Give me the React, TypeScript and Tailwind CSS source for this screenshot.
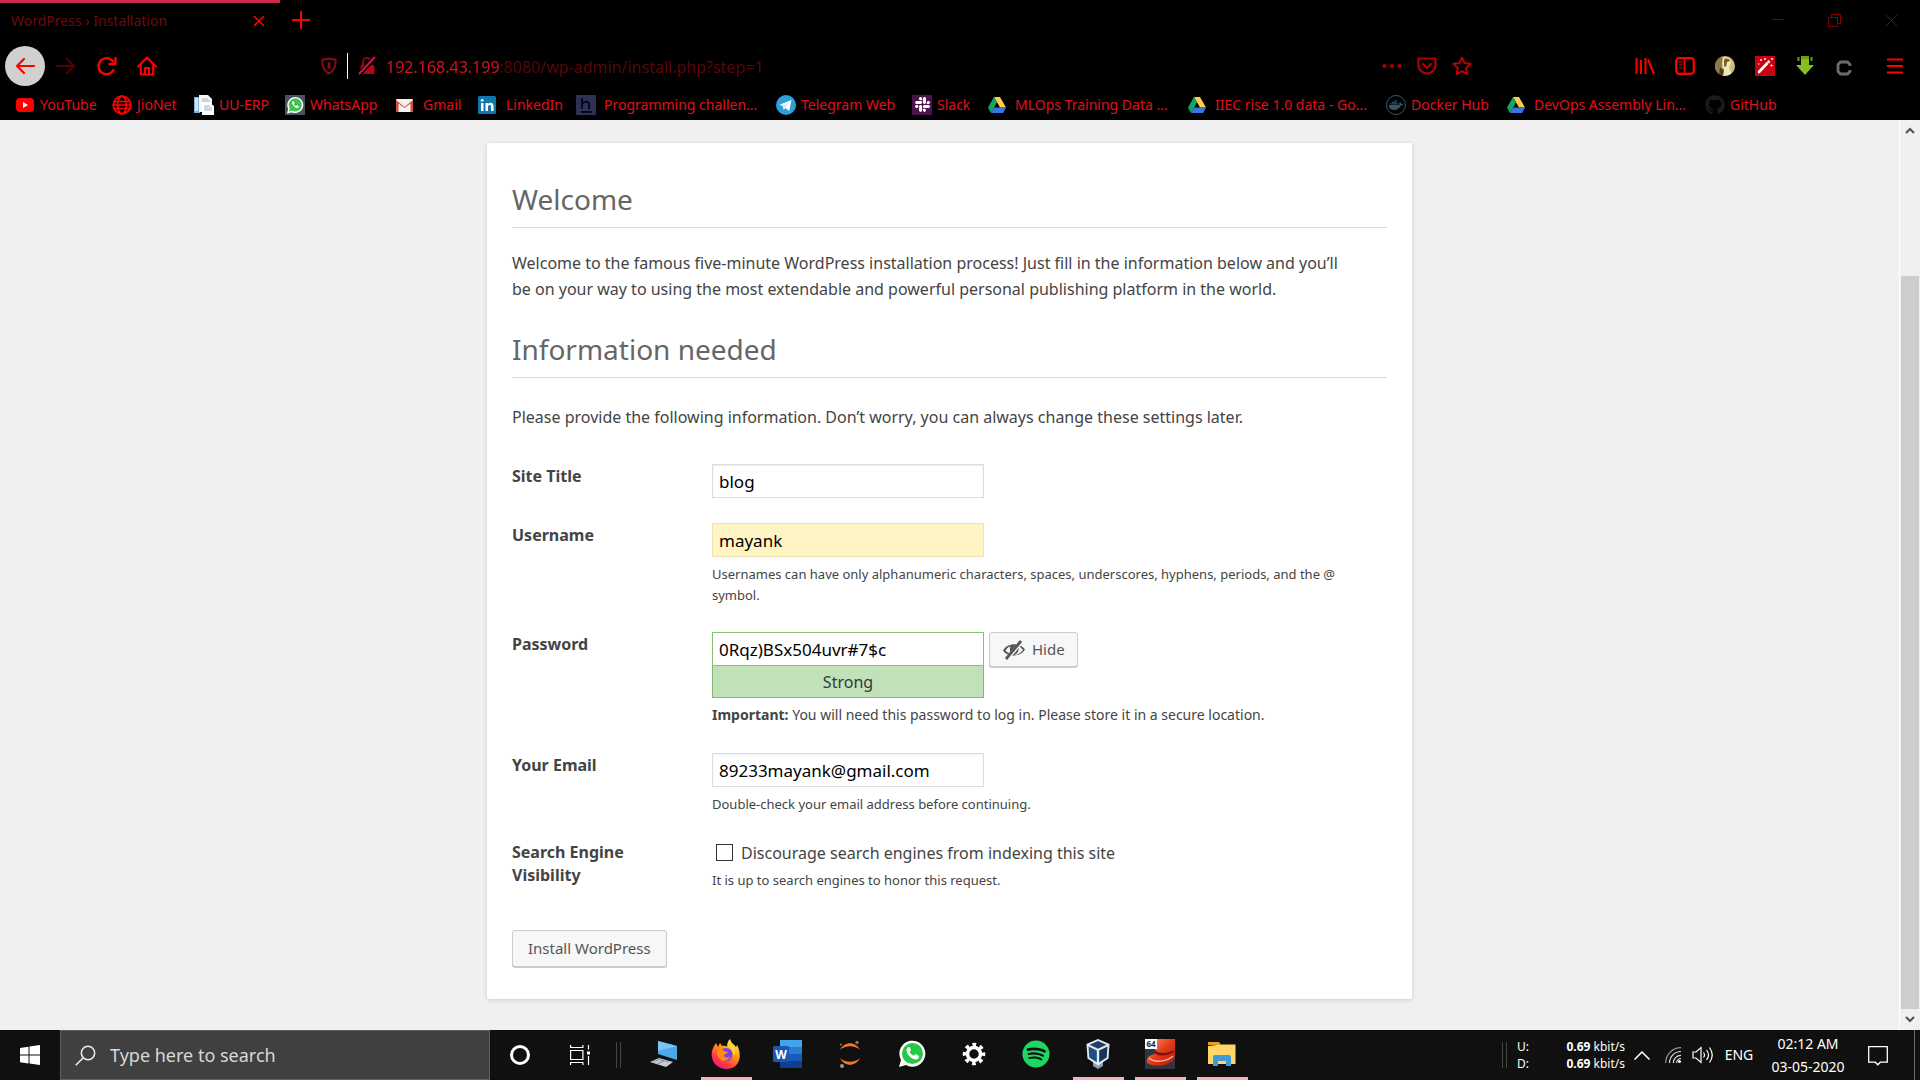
import type { ReactNode } from "react";
import { FaDocker, FaGithub, FaSlack, FaSpotify } from "react-icons/fa6";

const RED = "#ff0000";

function Drive() {
  return (
    <svg viewBox="0 0 20 20" className="h-5 w-5">
      <path d="M7 2h6l6 10.5h-6z" fill="#ffcf48" />
      <path d="M7 2 1 12.5 4 18l6-10.7z" fill="#11a861" />
      <path d="M7 12.5h12L16 18H4z" fill="#3777e3" />
    </svg>
  );
}

type Bookmark = { name: string; width: string; wide?: boolean; icon: ReactNode };

const bookmarks: Bookmark[] = [
  {
    name: "YouTube",
    width: "w-[97px]",
    icon: (
      <svg viewBox="0 0 20 20" className="h-5 w-5">
        <rect x="1" y="3" width="18" height="14" rx="4" fill={RED} />
        <path d="M8 7v6l5-3z" fill="#fff" />
      </svg>
    ),
  },
  {
    name: "JioNet",
    width: "w-[82px]",
    icon: (
      <svg viewBox="0 0 20 20" className="h-5 w-5" fill="none" stroke={RED} strokeWidth="1.8">
        <circle cx="10" cy="10" r="8.8" />
        <ellipse cx="10" cy="10" rx="4.4" ry="8.8" />
        <path d="M2 6.5h16M2 13.5h16M1 10h18" strokeWidth="1.4" />
      </svg>
    ),
  },
  {
    name: "UU-ERP",
    width: "w-[91px]",
    icon: (
      <svg viewBox="0 0 20 20" className="h-5 w-5">
        <path d="M0 2h6v16H0z" fill="#7fb0d8" />
        <path d="M1 3h3v13H1z" fill="#cfe5f5" />
        <path d="M5 0h9l4 4v13H5z" fill="#f4f7fa" />
        <path d="M8 8h8l4 3v9H8z" fill="#fff" />
        <path d="M8 4h6M8 6h8M10 11h6M10 13h8M10 15h8" stroke="#9fb4c6" strokeWidth="1" />
      </svg>
    ),
  },
  {
    name: "WhatsApp",
    width: "w-[110px]",
    icon: (
      <span className="flex h-5 w-5 items-center justify-center bg-[#47535e]">
        <svg viewBox="0 0 20 20" className="h-5 w-5">
          <path d="M3 17.5 4 13.700A7.300 7.300 0 1 1 7 16.500z" fill="#3fc351" stroke="#fff" strokeWidth="1.400" />
          <path d="M7.500 6.500c-2 2 3.500 8 6 6l.3-1.300-1.800-1-1 .9c-1-.4-1.800-1.200-2.200-2.100l.8-.8-.7-1.700z" fill="#fff" />
        </svg>
      </span>
    ),
  },
  {
    name: "Gmail",
    width: "w-[83px]",
    wide: true,
    icon: (
      <svg viewBox="0 0 20 20" className="h-5 w-5">
        <rect x="1" y="4" width="17" height="13" rx="1" fill="#f2f2f2" />
        <path d="M1 17V5l8.500 7L18 5v12h-2.500V8.500L9.500 13 3.500 8.500V17z" fill="#d54b3d" />
      </svg>
    ),
  },
  {
    name: "LinkedIn",
    width: "w-[98px]",
    wide: true,
    icon: (
      <svg viewBox="0 0 20 20" className="h-5 w-5">
        <rect x="0" y="1" width="18" height="18" rx="1.500" fill="#0f76b0" />
        <path d="M3 8h2.500v8H3zM7.500 8H10v1c1.500-2 5.500-1.700 5.500 2v5H13v-4.300c0-2.300-3-2-3 0V16H7.500z" fill="#fff" />
        <circle cx="4.200" cy="5.300" r="1.400" fill="#fff" />
      </svg>
    ),
  },
  {
    name: "Programming challen...",
    width: "w-[200px]",
    wide: true,
    icon: (
      <svg viewBox="0 0 20 20" className="h-5 w-5">
        <rect width="20" height="20" rx="1" fill="#2d3155" />
        <path d="M6 3v11M6 9c1.500-3 7-3 7 .5V14M5 17h11" stroke="#060818" strokeWidth="2" fill="none" />
      </svg>
    ),
  },
  {
    name: "Telegram Web",
    width: "w-[136px]",
    icon: (
      <svg viewBox="0 0 20 20" className="h-5 w-5">
        <circle cx="10" cy="10" r="10" fill="#2f9fd9" />
        <path d="m3.500 9.700 12-4.700-2.300 11-4-3-1.700 2-.5-3.800z" fill="#fff" />
        <path d="m7 11.200 6-4-4.500 5z" fill="#b9dcf0" />
      </svg>
    ),
  },
  {
    name: "Slack",
    width: "w-[75px]",
    icon: (
      <span className="flex h-5 w-5 items-center justify-center bg-[#4a154b]">
        <FaSlack color="#fff" size={17} />
      </span>
    ),
  },
  { name: "MLOps Training Data ...", width: "w-[200px]", wide: true, icon: <Drive /> },
  { name: "IIEC rise 1.0 data - Go...", width: "w-[199px]", wide: true, icon: <Drive /> },
  {
    name: "Docker Hub",
    width: "w-[120px]",
    icon: (
      <span className="flex h-5 w-5 items-center justify-center rounded-full border border-[#35566c]">
        <FaDocker color="#35566c" size={14} />
      </span>
    ),
  },
  { name: "DevOps Assembly Lin...", width: "w-[199px]", wide: true, icon: <Drive /> },
  { name: "GitHub", width: "w-[80px]", icon: <FaGithub color="#191b1e" size={20} /> },
];

function IconButton({ label, className = "w-10", children }: { label: string; className?: string; children: ReactNode }) {
  return (
    <button type="button" aria-label={label} className={`flex h-10 shrink-0 items-center justify-center ${className}`}>
      {children}
    </button>
  );
}

function BrowserChrome() {
  return (
    <header className="bg-black text-[#e0101a]">
      <div className="flex h-11 items-start justify-between">
        <div className="flex items-start">
          <div className="flex h-11 w-[280px] items-start justify-between border-t-3 border-[#cc2a4c] pr-[9px] pl-[11px]">
            <span className="pt-2 text-sm leading-5 text-[#6e0a0e]">WordPress › Installation</span>
            <button type="button" aria-label="Close tab" className="flex h-9 w-6 items-center justify-center">
              <svg viewBox="0 0 12 12" className="h-3 w-3" stroke={RED} strokeWidth="1.6">
                <path d="m1 1 10 10M11 1 1 11" />
              </svg>
            </button>
          </div>
          <IconButton label="New tab" className="w-[42px]">
            <svg viewBox="0 0 18 18" className="h-[18px] w-[18px]" stroke={RED} strokeWidth="2">
              <path d="M9 0v18M0 9h18" />
            </svg>
          </IconButton>
        </div>
        <div className="flex">
          <IconButton label="Minimize" className="w-[57px]">
            <svg viewBox="0 0 12 12" className="h-3 w-3" stroke="#6e0000">
              <path d="M0 5.500h12" />
            </svg>
          </IconButton>
          <IconButton label="Restore" className="w-[57px]">
            <svg viewBox="0 0 13 13" className="h-[13px] w-[13px]" fill="none" stroke="#8a0000">
              <path d="M.5 3.500h9v9h-9zM3.500 3.500v-3h9v9h-3" />
            </svg>
          </IconButton>
          <IconButton label="Close" className="w-[57px]">
            <svg viewBox="0 0 13 13" className="h-[13px] w-[13px]" stroke="#8a0000">
              <path d="m.5.5 12 12M12.500.5l-12 12" />
            </svg>
          </IconButton>
        </div>
      </div>

      <div className="flex h-11 items-center pr-[5px] pl-[5px]">
        <div className="flex items-center gap-px">
          <button type="button" aria-label="Back" className="flex h-10 w-10 items-center justify-center rounded-full bg-[#d0d0d0]">
            <svg viewBox="0 0 20 18" className="h-[18px] w-5" fill="none" stroke={RED} strokeWidth="2.200" strokeLinecap="round" strokeLinejoin="round">
              <path d="M19 9H2M9 2 2 9l7 7" />
            </svg>
          </button>
          <IconButton label="Forward">
            <svg viewBox="0 0 20 18" className="h-[18px] w-5" fill="none" stroke="#550000" strokeWidth="2.200" strokeLinecap="round" strokeLinejoin="round">
              <path d="M1 9h17M11 2l7 7-7 7" />
            </svg>
          </IconButton>
          <IconButton label="Reload">
            <svg viewBox="0 0 20 20" className="h-5 w-5" fill="none" stroke={RED} strokeWidth="2.400" strokeLinecap="round">
              <path d="M16.500 14A8 8 0 1 1 16 5.500" />
              <path d="M18.500 2v6h-6" strokeLinejoin="round" />
            </svg>
          </IconButton>
          <IconButton label="Home" className="w-[38px]">
            <svg viewBox="0 0 20 20" className="h-5 w-5" fill="none" stroke={RED} strokeWidth="2.200" strokeLinejoin="round" strokeLinecap="round">
              <path d="M1.200 10.500 10 1.500l8.800 9M3.800 9.500V18.500h12.400V9.500M8 18v-6h4v6" />
            </svg>
          </IconButton>
        </div>

        <div className="mr-[146px] ml-[145px] flex flex-1 items-center">
          <IconButton label="Tracking protection" className="w-9">
            <svg viewBox="0 0 18 20" className="h-[18px] w-4" fill="none" stroke="#8a0a12" strokeWidth="2.200" strokeLinejoin="round">
              <path d="M9 1.500 16.500 3c.3 7.500-1.500 12.500-7.500 15.500C3 15.500 1.200 10.500 1.500 3z" />
              <path d="M9 6v7" strokeWidth="3" />
            </svg>
          </IconButton>
          <span className="h-[26px] w-px bg-white" />
          <IconButton label="Connection is not secure" className="w-[38px]">
            <svg viewBox="0 0 18 20" className="h-5 w-[18px]" fill="none">
              <path d="M5 9V6a4 4 0 0 1 8 0v3" stroke="#8a0a12" strokeWidth="2" />
              <rect x="2.500" y="9" width="14" height="9" rx="1.500" fill="#b00a14" />
              <path d="m1 18.500 16-17" stroke="#000" strokeWidth="4.500" />
              <path d="m1 18 16-17" stroke="#d5144c" strokeWidth="2" />
            </svg>
          </IconButton>
          <input
            type="text"
            aria-label="Address"
            defaultValue="192.168.43.199:8080/wp-admin/install.php?step=1"
            className="min-w-0 flex-1 bg-[linear-gradient(90deg,#e0101a_113px,#5c0508_113px)] bg-clip-text pt-0.5 text-base leading-6 text-transparent outline-none"
          />
          <IconButton label="Page actions" className="w-[35px]">
            <svg viewBox="0 0 20 6" className="h-1.5 w-5" fill="#b00000">
              <circle cx="2.500" cy="3" r="2.100" />
              <circle cx="10" cy="3" r="2.100" />
              <circle cx="17.500" cy="3" r="2.100" />
            </svg>
          </IconButton>
          <IconButton label="Save to Pocket" className="w-[35px]">
            <svg viewBox="0 0 20 20" className="h-5 w-5" fill="none" stroke="#b00000" strokeWidth="2.200" strokeLinecap="round" strokeLinejoin="round">
              <path d="M1.500 2.500h17V9a8.500 8.500 0 0 1-17 0zM6 8l4 4 4-4" />
            </svg>
          </IconButton>
          <IconButton label="Bookmark" className="w-[35px]">
            <svg viewBox="0 0 20 20" className="h-5 w-5" fill="none" stroke="#c00000" strokeWidth="1.900" strokeLinejoin="round">
              <path d="m10 1.500 2.600 5.600 6 .7-4.400 4.200 1.200 6.200-5.400-3-5.400 3L5.800 12 1.400 7.800l6-.7z" />
            </svg>
          </IconButton>
        </div>

        <div className="flex items-center">
          <IconButton label="Library">
            <svg viewBox="0 0 20 20" className="h-5 w-5" stroke={RED} strokeWidth="2">
              <path d="M1.500 2v16M6 4v14M10.500 2v16M13 3.500l6 14.500" />
            </svg>
          </IconButton>
          <IconButton label="Sidebar">
            <svg viewBox="0 0 20 18" className="h-[18px] w-5" fill="none" stroke={RED} strokeWidth="2.200">
              <rect x="1.200" y="1.200" width="17.600" height="15.600" rx="3" />
              <path d="M9.500 1v16" strokeWidth="1.800" />
              <path d="M4 5h3.500M4 8h3.500M4 11h3.500" strokeWidth="1.200" />
            </svg>
          </IconButton>
          <IconButton label="Account">
            <svg viewBox="0 0 20 20" className="h-5 w-5">
              <defs>
                <clipPath id="face">
                  <circle cx="10" cy="10" r="10" />
                </clipPath>
              </defs>
              <g clipPath="url(#face)">
                <rect width="20" height="20" fill="#cdbd7c" />
                <path d="M0 0h7l1 6-4 14H0z" fill="#8c7a46" />
                <path d="M8 2c4-2 8 0 8 5l-2 4 3 9H7l2-8-2-4z" fill="#f2e8bd" />
                <path d="M9 4c1-2 5-2 6 1l-3 1-1 5-2-1z" fill="#75602f" />
                <path d="M5 11l4 3-1 6H4z" fill="#4e3f22" />
              </g>
            </svg>
          </IconButton>
          <IconButton label="Wand">
            <svg viewBox="0 0 20 20" className="h-5 w-5">
              <rect width="20" height="20" fill="#c90410" />
              <path d="m4 16 8-8.500" stroke="#fff" strokeWidth="2.600" strokeLinecap="round" />
              <path d="m13 6.500 1.500-1.500" stroke="#fff" strokeWidth="2.600" />
              <path d="M6 3v2M5 4h2M16.500 8.500v2M15.500 9.500h2M10 2v2M9 3h2M17 2v2M16 3h2M3 8h1.500" stroke="#fff" strokeWidth="1" />
            </svg>
          </IconButton>
          <IconButton label="Downloads">
            <svg viewBox="0 0 20 20" className="h-5 w-5" fill="#86bd1f">
              <path d="M6 3h8v6h5l-9 10L1 9h5z" />
              <path d="M2.500 1h2v4h-2zM15.500 1h2v4h-2zM6 0h8v3H6z" fill="#6a9c14" />
            </svg>
          </IconButton>
          <IconButton label="Extension" className="w-[38px]">
            <svg viewBox="0 0 16 16" className="mt-1 h-4 w-4" fill="none" stroke="#6c6c6c" strokeWidth="2.800">
              <path d="M14 6V4.500L11.500 2h-7L2 4.500v7L4.500 14h7l2.500-2.500V10" />
            </svg>
          </IconButton>
          <IconButton label="Menu" className="ml-3 w-10">
            <svg viewBox="0 0 16 16" className="h-4 w-4" stroke={RED} strokeWidth="2.200">
              <path d="M0 1.500h16M0 8h16M0 14.500h16" />
            </svg>
          </IconButton>
        </div>
      </div>

      <nav aria-label="Bookmarks" className="flex h-8 items-center overflow-hidden pt-px pl-[15px] text-sm">
        {bookmarks.map((b) => (
          <a key={b.name} href="#" className={`flex shrink-0 items-center whitespace-nowrap ${b.width} ${b.wide ? "gap-2" : "gap-[5px]"}`}>
            <span className="flex w-5 shrink-0 justify-center">{b.icon}</span>
            {b.name}
          </a>
        ))}
      </nav>
    </header>
  );
}

function Row({ label, htmlFor, children }: { label: string; htmlFor: string; children: ReactNode }) {
  return (
    <div className="flex pb-[25px]">
      <label htmlFor={htmlFor} className="w-[200px] shrink-0 pt-px pr-16 text-base leading-[23px] font-bold text-[#444]">
        {label}
      </label>
      <div className="flex-1">{children}</div>
    </div>
  );
}

const field = "block h-[34px] w-[272px] border px-1.5 text-[17px] text-black outline-none";
const help = "text-[13px] leading-[21px] text-[#444]";

function InstallForm() {
  return (
    <form className="mx-auto w-[925px] rounded-[2px] bg-white px-[25px] pt-9 pb-8 text-[#444] shadow-[0_1px_4px_rgba(0,0,0,0.16)]">
      <h1 className="border-b border-[#dadada] pb-2 text-[28px] leading-10 text-[#666]">Welcome</h1>
      <p className="pt-[22px] pr-9 text-base leading-[26px]">
        Welcome to the famous five-minute WordPress installation process! Just fill in the information below and you’ll
        be on your way to using the most extendable and powerful personal publishing platform in the world.
      </p>
      <h2 className="mt-[27px] border-b border-[#dadada] pb-2 text-[28px] leading-10 text-[#666]">Information needed</h2>
      <p className="pt-[26px] text-base leading-[26px]">
        Please provide the following information. Don’t worry, you can always change these settings later.
      </p>

      <div className="pt-[34px]">
        <Row label="Site Title" htmlFor="title">
          <input id="title" type="text" defaultValue="blog" className={`${field} border-[#ddd] shadow-[inset_0_1px_2px_rgba(0,0,0,0.07)]`} />
        </Row>
        <Row label="Username" htmlFor="user">
          <input id="user" type="text" defaultValue="mayank" className={`${field} border-[#eee0b0] bg-[#fff5c4]`} />
          <p className={`${help} pt-[7px] pr-10 pb-px`}>
            Usernames can have only alphanumeric characters, spaces, underscores, hyphens, periods, and the @ symbol.
          </p>
        </Row>
        <Row label="Password" htmlFor="pass">
          <div className="flex gap-[5px]">
            <div className="w-[272px]">
              <input id="pass" type="text" defaultValue="0Rqz)BSx504uvr#7$c" className={`${field} border-[#83c373]`} />
              <div className="h-8 border border-t-0 border-[#83b878] bg-[#c1e1b9] text-center text-base leading-8 text-[#32373c]">Strong</div>
            </div>
            <button
              type="button"
              className="flex h-[35px] items-center gap-1.5 rounded-[3px] border border-[#ccc] bg-[#f7f7f7] px-3 text-[15px] text-[#555] shadow-[0_1px_0_#ccc]"
            >
              <svg viewBox="0 0 24 20" className="h-5 w-6">
                <path d="M1 10.500C5 3 18 2 23 9.500 18 17.500 5 17.500 1 10.500z" fill="#555" />
                <path d="M12.500 15c3.500 0 6-1.800 8.500-5-1.500-2-3-3.200-5-4 1.500 4 0 7-3.500 9z" fill="#f7f7f7" />
                <path d="M3.500 10.500C5 8.500 6.500 7 8.500 6.300 7.500 9 7.800 11.500 9 13.500c-2.500-.5-4.300-1.500-5.500-3z" fill="#f7f7f7" />
                <circle cx="12" cy="9.500" r="4" fill="#555" />
                <path d="M5 19 20 1" stroke="#f7f7f7" strokeWidth="4" />
                <path d="M4 19 19 1" stroke="#555" strokeWidth="2.800" />
              </svg>
              Hide
            </button>
          </div>
          <p className="pt-[5px] pb-px text-sm leading-6 text-[#444]">
            <strong className="font-bold">Important:</strong> You will need this password to log in. Please store it in a secure location.
          </p>
        </Row>
        <Row label="Your Email" htmlFor="email">
          <input id="email" type="email" defaultValue="89233mayank@gmail.com" className={`${field} border-[#ddd] shadow-[inset_0_1px_2px_rgba(0,0,0,0.07)]`} />
          <p className={`${help} pt-[7px]`}>Double-check your email address before continuing.</p>
        </Row>
        <Row label="Search Engine Visibility" htmlFor="public">
          <div className="flex items-start gap-2 pl-1">
            <input id="public" type="checkbox" className="mt-1 h-[17px] w-[17px] appearance-none border border-[#333] bg-white" />
            <label htmlFor="public" className="text-base leading-[26px]">
              Discourage search engines from indexing this site
            </label>
          </div>
          <p className={`${help} pt-1`}>It is up to search engines to honor this request.</p>
        </Row>
      </div>
      <button
        type="submit"
        className="mt-3.5 h-[37px] rounded-[3px] border border-[#ccc] bg-[#f7f7f7] px-[15px] text-[15px] text-[#555] shadow-[0_1px_0_#ccc]"
      >
        Install WordPress
      </button>
    </form>
  );
}

function ScrollBar() {
  return (
    <div className="flex w-[21px] shrink-0 flex-col border-l border-white bg-[#f0f0f0]">
      <button type="button" aria-label="Scroll up" className="flex h-5 items-center justify-center">
        <svg viewBox="0 0 10 7" className="h-[7px] w-2.5" fill="none" stroke="#505050" strokeWidth="2">
          <path d="m1 6 4-4 4 4" />
        </svg>
      </button>
      <div className="flex flex-1 flex-col px-px pt-[136px]">
        <div className="flex-1 bg-[#cdcdcd]" />
      </div>
      <button type="button" aria-label="Scroll down" className="flex h-[21px] items-center justify-center">
        <svg viewBox="0 0 10 7" className="h-[7px] w-2.5" fill="none" stroke="#505050" strokeWidth="2">
          <path d="m1 1 4 4 4-4" />
        </svg>
      </button>
    </div>
  );
}

type AppItem = { name: string; open?: boolean; icon: ReactNode };

const apps: AppItem[] = [
  {
    name: "This PC",
    icon: (
      <svg viewBox="0 0 28 28" className="h-7 w-7">
        <path d="m8 1 19 5v14L8 14z" fill="#4aa9ea" />
        <path d="m8 1 19 5-19 5z" fill="#79c4f5" />
        <path d="m0 22 9-4 14 4-7 5z" fill="#c5ccd1" />
        <path d="m3 22 6-2.500L19 22M7 24l7-3" stroke="#8b969e" fill="none" />
      </svg>
    ),
  },
  {
    name: "Firefox",
    open: true,
    icon: (
      <svg viewBox="0 0 30 30" className="h-[30px] w-[30px]">
        <defs>
          <linearGradient id="ff" x1="0.8" y1="0" x2="0.2" y2="1">
            <stop offset="0" stopColor="#fff44f" />
            <stop offset="0.4" stopColor="#ff980e" />
            <stop offset="0.75" stopColor="#ff3647" />
            <stop offset="1" stopColor="#e31587" />
          </linearGradient>
        </defs>
        <path d="M3 7 5 4l2 4 2-4 2 3c2-.5 4 0 5 .5C16 4 18 1 19 0c1 4 4 5 6 8l1-2c5 9 4 23-10 24C3 30-3 18 3 7z" fill="url(#ff)" />
        <circle cx="15" cy="15.500" r="6.500" fill="#7542e5" />
        <path d="M6 11c3-2 6-1 7 1l4 1c-1 2-4 2-4 4 1 2 4 2 6 0-1 5-8 7-11 2-2-3-2-5-2-8z" fill="#ff8a16" />
        <path d="M17 8c4 1 6 5 5 9 3-3 3-8 0-11-1-1-3-2-4-5-1 2-2 5-1 7z" fill="#ffd43a" />
      </svg>
    ),
  },
  {
    name: "Word",
    icon: (
      <svg viewBox="0 0 30 28" className="h-7 w-[30px]">
        <path d="M7 0h22v7H7z" fill="#41a5ee" />
        <path d="M7 7h22v7H7z" fill="#2b7cd3" />
        <path d="M7 14h22v7H7z" fill="#185abd" />
        <path d="M7 21h22v7H7z" fill="#103f91" />
        <rect y="6" width="16" height="16" rx="1" fill="#1b56b4" />
        <text x="8" y="18.500" textAnchor="middle" fontSize="12" fontWeight="700" fill="#fff" fontFamily="Open Sans, sans-serif">
          W
        </text>
      </svg>
    ),
  },
  {
    name: "Jupyter",
    icon: (
      <svg viewBox="0 0 24 28" className="h-7 w-6">
        <path d="M2 10C6 1 18 1 22 10 17 5 7 5 2 10zM2 18c4 9 16 9 20 0-5 5-15 5-20 0z" fill="#f37726" />
        <circle cx="19" cy="2.500" r="1.700" fill="#767677" />
        <circle cx="3" cy="4.500" r="1.100" fill="#767677" />
        <circle cx="4" cy="26" r="2" fill="#989798" />
      </svg>
    ),
  },
  {
    name: "WhatsApp",
    icon: (
      <svg viewBox="0 0 28 28" className="h-7 w-7">
        <path d="M1 27 3 20A13 13 0 1 1 8 25z" fill="#fff" />
        <circle cx="14.500" cy="13.500" r="10.500" fill="#25c943" />
        <path d="M9.500 7.500c-4 5 6 15 11 11l.5-2.500-3.500-2-1.700 1.700c-2-.8-3.400-2.200-4.200-4l1.500-1.500-1.300-3.200z" fill="#fff" />
      </svg>
    ),
  },
  {
    name: "Settings",
    icon: (
      <svg viewBox="0 0 24 24" className="h-6 w-6" fill="none" stroke="#fff">
        <circle cx="12" cy="12" r="6.500" strokeWidth="3.500" />
        <circle cx="12" cy="12" r="9.500" strokeWidth="3.500" strokeDasharray="3.730 3.730" strokeDashoffset="1.860" />
      </svg>
    ),
  },
  { name: "Spotify", icon: <FaSpotify color="#1ed760" size={28} /> },
  {
    name: "VirtualBox",
    open: true,
    icon: (
      <svg viewBox="0 0 26 30" className="h-[30px] w-[26px]">
        <path d="M8 22h10v5l-5 3-5-3z" fill="#8c9fb5" />
        <path d="m13 0 11.500 5-1 14.500-10.500 7-10.500-7L1.500 5z" fill="#e4ebf2" />
        <path d="m13 2 8.500 3.700-8.500 4.100-8.500-4.100z" fill="#223e66" />
        <path d="m3.500 7.500 8.300 4v11.800L4.300 18.500z" fill="#1f4e82" />
        <path d="m22.500 7.500-8.300 4v11.800l7.500-4.800z" fill="#17345c" />
      </svg>
    ),
  },
  {
    name: "Red Hat VM",
    open: true,
    icon: (
      <svg viewBox="0 0 30 30" className="h-[30px] w-[30px]">
        <defs>
          <linearGradient id="hat" x1="0" y1="0" x2="1" y2="1">
            <stop offset="0" stopColor="#ff9a70" />
            <stop offset="0.5" stopColor="#e33a1c" />
            <stop offset="1" stopColor="#b51509" />
          </linearGradient>
        </defs>
        <rect width="30" height="30" fill="#34343f" />
        <path d="M10 0h20v18c-3 9-20 11-28 6-1-5 2-8 8-9z" fill="url(#hat)" />
        <path d="M10 11c3 4 13 4 19 0v2c-6 4-16 5-19 1z" fill="#7d140c" />
        <path d="M4 19c5 5 17 4 24-2" stroke="#ffb190" strokeWidth="1.500" fill="none" />
        <rect width="12" height="10" fill="#fff" />
        <text x="6" y="8" textAnchor="middle" fontSize="8" fontWeight="700" fill="#222" fontFamily="Open Sans, sans-serif">
          64
        </text>
      </svg>
    ),
  },
  {
    name: "File Explorer",
    open: true,
    icon: (
      <svg viewBox="0 0 28 24" className="h-6 w-7">
        <path d="M0 0h11l2 3H0z" fill="#e0a21a" />
        <path d="M0 4 13 2.500h14.500V22H0z" fill="#ffd767" />
        <path d="M5 24V15q0-2 2-2h14q2 0 2 2v9h-5v-5h-8v5z" fill="#3f9ad8" />
      </svg>
    ),
  },
];

function Separator() {
  return <span className="h-[26px] w-[5px] shrink-0 border-x border-[#454545]" />;
}

function Rate({ label }: { label: string }) {
  return (
    <div className="flex justify-between">
      <span>{label}</span>
      <span>
        <b>0.69</b> kbit/s
      </span>
    </div>
  );
}

function Taskbar() {
  return (
    <footer className="flex h-[50px] items-stretch bg-[#101010] text-white">
      <button type="button" aria-label="Start" className="flex w-[60px] shrink-0 items-center justify-center">
        <svg viewBox="0 0 20 20" className="h-5 w-5" fill="#fff">
          <path d="m0 3 8.500-1.300V9.500H0zM9.500 1.500 20 0v9.500H9.500zM0 10.500h8.500v8L0 17.200zM9.500 10.500H20V20L9.500 18.600z" />
        </svg>
      </button>
      <div className="flex w-[430px] items-center border border-[#5f5f5f] bg-[#404040] pl-3.5">
        <svg viewBox="0 0 21 21" className="h-[21px] w-[21px]" fill="none" stroke="#f0f0f0" strokeWidth="1.500">
          <circle cx="13" cy="8" r="6.700" />
          <path d="M8.300 12.700.7 20.300" />
        </svg>
        <input type="text" aria-label="Type here to search" placeholder="Type here to search" className="min-w-0 flex-1 bg-transparent pl-3.5 text-lg outline-none placeholder:text-[#d8d8d8]" />
      </div>
      <button type="button" aria-label="Cortana" className="flex w-[60px] shrink-0 items-center justify-center">
        <span className="h-5 w-5 rounded-full border-3 border-white" />
      </button>
      <button type="button" aria-label="Task view" className="flex w-[60px] shrink-0 items-center justify-center">
        <svg viewBox="0 0 21 20" className="h-5 w-[21px]" fill="none" stroke="#fff" strokeWidth="1.200">
          <path d="M.6 5.500h12.300v9H.6zM.6 0v2.500h12.300V0M.6 20v-2.500h12.300V20M18.500 0v4.500M18.500 11v9" />
          <path d="M17 6.500h3v3h-3z" fill="#fff" stroke="none" />
        </svg>
      </button>
      <div className="flex flex-1 items-center pl-1.5">
        <Separator />
        <div className="ml-3 flex h-full">
          {apps.map((a) => (
            <button key={a.name} type="button" aria-label={a.name} className="flex h-full w-[62px] flex-col items-center justify-between">
              <span className="flex flex-1 items-center">{a.icon}</span>
              <span className={`h-[3px] w-[51px] ${a.open ? "bg-[#f6b3b8]" : ""}`} />
            </button>
          ))}
        </div>
      </div>
      <div className="flex shrink-0 items-center">
        <Separator />
        <div className="mr-px ml-2.5 w-[108px] text-xs leading-[17px] text-white">
          <Rate label="U:" />
          <Rate label="D:" />
        </div>
        <button type="button" aria-label="Show hidden icons" className="flex w-8 justify-center">
          <svg viewBox="0 0 16 9" className="h-[9px] w-4" fill="none" stroke="#fff" strokeWidth="1.500">
            <path d="m.5 8.500 7.500-7.500 7.500 7.500" />
          </svg>
        </button>
        <button type="button" aria-label="Network" className="flex w-[30px] justify-center">
          <svg viewBox="0 0 16 16" className="h-4 w-4" fill="none" stroke="#ddd" strokeWidth="1.200">
            <path d="M.7 16A15.300 15.300 0 0 1 16 .7" stroke="#999" />
            <path d="M4.500 16A11.500 11.500 0 0 1 16 4.500M8.300 16A7.700 7.700 0 0 1 16 8.300M11.500 16a4.500 4.500 0 0 1 4.500-4.500" />
            <circle cx="14.500" cy="14.500" r="1.500" fill="#fff" stroke="none" />
          </svg>
        </button>
        <button type="button" aria-label="Volume" className="flex w-[30px] justify-center">
          <svg viewBox="0 0 22 18" className="h-[18px] w-[22px]" fill="none" stroke="#fff" strokeWidth="1.200">
            <path d="M1 6h3l5-4.500v15L4 12H1zM11.500 6.500q2 2.500 0 5M14.500 4q4 5 0 10M17.500 1.500q5.500 7.500 0 15" />
          </svg>
        </button>
        <button type="button" className="w-[38px] pl-1 text-center text-sm">
          ENG
        </button>
        <button type="button" className="w-[104px] text-center text-sm leading-[23px]">
          <span className="block">02:12 AM</span>
          <span className="block">03-05-2020</span>
        </button>
        <button type="button" aria-label="Notifications" className="flex w-[54px] pt-px pl-2">
          <svg viewBox="0 0 20 20" className="h-5 w-5" fill="none" stroke="#fff" strokeWidth="1.300">
            <path d="M.7.700h18.600v15.500h-7L9.800 18.800 7.300 16.200H.7z" />
          </svg>
        </button>
        <span className="h-[50px] w-1.5 border-l border-[#6a6a6a]" />
      </div>
    </footer>
  );
}

export default function App() {
  return (
    <div className="flex min-h-screen flex-col bg-[#f0f0f0] [font-family:'Noto_Sans','Open_Sans',sans-serif]">
      <BrowserChrome />
      <main className="flex flex-1">
        <div className="flex-1 pt-[23px] pb-[30px]">
          <InstallForm />
        </div>
        <ScrollBar />
      </main>
      <Taskbar />
    </div>
  );
}
